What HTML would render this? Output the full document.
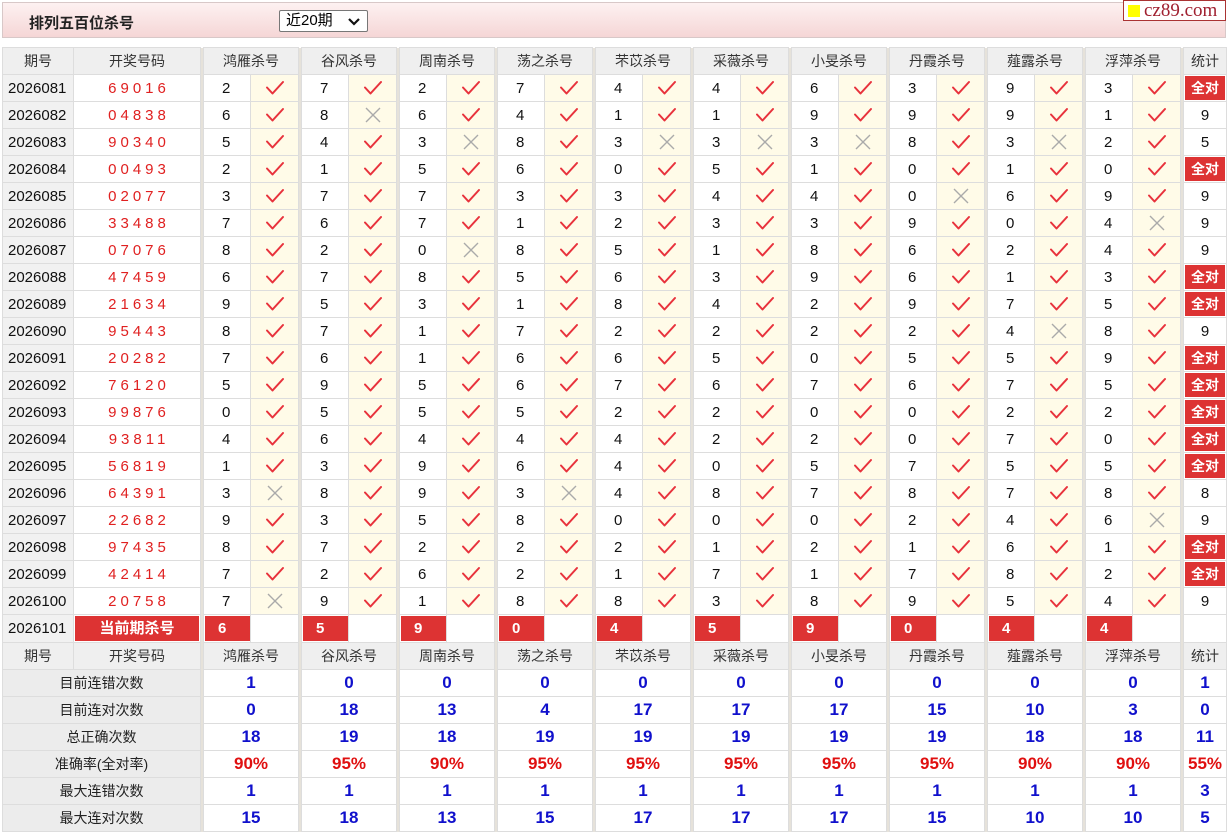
<!DOCTYPE html>
<html><head><meta charset="utf-8"><style>
*{margin:0;padding:0;box-sizing:border-box}
body{width:1228px;height:830px;background:#fff;font-family:"Liberation Sans","Noto Sans CJK SC",sans-serif;position:relative;overflow:hidden}
.top{position:absolute;left:2px;top:2px;width:1224px;height:36px;background:linear-gradient(#fdf1f1,#f5d6d6);border:1px solid #d8c8c8}
.top b{position:absolute;left:26px;top:9px;font-size:15px;color:#222}
.sel{position:absolute;left:276px;top:7px;width:89px;height:22px;border:1px solid #777;border-radius:2px;background:#fff;font-size:15px;padding-left:6px;line-height:20px}
.sel svg{position:absolute;right:7px;top:7px}
.logo{position:absolute;left:1123px;top:0;width:103px;height:21px;border:1px solid #a33;background:#fff;font-family:"Liberation Serif",serif;font-size:19px;color:#a02030;line-height:19px;padding-left:20px}
.logo i{position:absolute;left:4px;top:4px;width:12px;height:12px;background:#ff0}
table{position:absolute;left:2px;top:47px;border-collapse:collapse;table-layout:fixed}
td{border:1px solid #ddd;height:27px;font-size:15px;color:#111;white-space:nowrap;overflow:hidden}
.g{width:3px;background:#e6e2da;border-top:none;border-bottom:none;padding:0}
.h td{background:#efefef;text-align:center;font-size:14px;color:#333}
.h td.g{background:#e6e2da}
.q{background:#f1f1f1;padding-left:5px}
.k{color:#e02020;text-align:center;letter-spacing:4px;padding-left:4px}
.n{padding-left:18px}
.m{background:#fffbe8;text-align:center;padding:0}
.m svg{display:block;margin:0 auto}
.s{text-align:center}
.qd{background:#fff;padding:1px 1px}
.qd span{display:block;background:#d33;color:#fff;font-weight:bold;text-align:center;height:24px;line-height:24px;font-size:14px}
.cur{padding:1px}
.cur span{display:block;background:#d33;color:#fff;font-weight:bold;height:25px;line-height:25px;font-size:15px;text-align:center}
.cn{padding:1px 0 1px 1px}
.cn span{display:block;background:#d33;color:#fff;font-weight:bold;height:25px;line-height:25px;padding-left:13px;font-size:15px}
.lb{background:#ececec;text-align:center;color:#222;font-size:14px}
.v{text-align:center;color:#1010cc;font-weight:bold;font-size:17px;font-family:"Liberation Sans",sans-serif}
.p{color:#e01010}
</style></head><body>
<svg width="0" height="0" style="position:absolute"><symbol id="ck" viewBox="0 0 22 18"><path d="M3 8.5 L8.5 14.5 L19 3" fill="none" stroke="#e8323c" stroke-width="2" stroke-linecap="round" stroke-linejoin="round"/></symbol><symbol id="xx" viewBox="0 0 18 18"><path d="M2 2 L16 16 M16 2 L2 16" stroke="#aaa" stroke-width="1.4"/></symbol></svg>
<div class="top"><b>排列五百位杀号</b><div class="sel">近20期<svg width="12" height="8" viewBox="0 0 12 8"><path d="M1 1 L6 6 L11 1" fill="none" stroke="#111" stroke-width="2.2"/></svg></div></div>
<div class="logo"><i></i>cz89.com</div>
<table>
<colgroup><col style="width:71px"><col style="width:127px"><col span="1" style="width:3px"><col style="width:47px"><col style="width:48px"><col style="width:3px"><col style="width:47px"><col style="width:48px"><col style="width:3px"><col style="width:47px"><col style="width:48px"><col style="width:3px"><col style="width:47px"><col style="width:48px"><col style="width:3px"><col style="width:47px"><col style="width:48px"><col style="width:3px"><col style="width:47px"><col style="width:48px"><col style="width:3px"><col style="width:47px"><col style="width:48px"><col style="width:3px"><col style="width:47px"><col style="width:48px"><col style="width:3px"><col style="width:47px"><col style="width:48px"><col style="width:3px"><col style="width:47px"><col style="width:48px"><col style="width:3px"><col style="width:43px"></colgroup>
<tr class="h"><td>期号</td><td>开奖号码</td><td class="g"></td><td colspan="2">鸿雁杀号</td><td class="g"></td><td colspan="2">谷风杀号</td><td class="g"></td><td colspan="2">周南杀号</td><td class="g"></td><td colspan="2">荡之杀号</td><td class="g"></td><td colspan="2">芣苡杀号</td><td class="g"></td><td colspan="2">采薇杀号</td><td class="g"></td><td colspan="2">小旻杀号</td><td class="g"></td><td colspan="2">丹霞杀号</td><td class="g"></td><td colspan="2">薤露杀号</td><td class="g"></td><td colspan="2">浮萍杀号</td><td class="g"></td><td>统计</td></tr>
<tr><td class="q">2026081</td><td class="k">69016</td><td class="g"></td><td class="n">2</td><td class="m"><svg width="22" height="18"><use href="#ck"/></svg></td><td class="g"></td><td class="n">7</td><td class="m"><svg width="22" height="18"><use href="#ck"/></svg></td><td class="g"></td><td class="n">2</td><td class="m"><svg width="22" height="18"><use href="#ck"/></svg></td><td class="g"></td><td class="n">7</td><td class="m"><svg width="22" height="18"><use href="#ck"/></svg></td><td class="g"></td><td class="n">4</td><td class="m"><svg width="22" height="18"><use href="#ck"/></svg></td><td class="g"></td><td class="n">4</td><td class="m"><svg width="22" height="18"><use href="#ck"/></svg></td><td class="g"></td><td class="n">6</td><td class="m"><svg width="22" height="18"><use href="#ck"/></svg></td><td class="g"></td><td class="n">3</td><td class="m"><svg width="22" height="18"><use href="#ck"/></svg></td><td class="g"></td><td class="n">9</td><td class="m"><svg width="22" height="18"><use href="#ck"/></svg></td><td class="g"></td><td class="n">3</td><td class="m"><svg width="22" height="18"><use href="#ck"/></svg></td><td class="g"></td><td class="qd"><span>全对</span></td></tr>
<tr><td class="q">2026082</td><td class="k">04838</td><td class="g"></td><td class="n">6</td><td class="m"><svg width="22" height="18"><use href="#ck"/></svg></td><td class="g"></td><td class="n">8</td><td class="m"><svg width="18" height="18"><use href="#xx"/></svg></td><td class="g"></td><td class="n">6</td><td class="m"><svg width="22" height="18"><use href="#ck"/></svg></td><td class="g"></td><td class="n">4</td><td class="m"><svg width="22" height="18"><use href="#ck"/></svg></td><td class="g"></td><td class="n">1</td><td class="m"><svg width="22" height="18"><use href="#ck"/></svg></td><td class="g"></td><td class="n">1</td><td class="m"><svg width="22" height="18"><use href="#ck"/></svg></td><td class="g"></td><td class="n">9</td><td class="m"><svg width="22" height="18"><use href="#ck"/></svg></td><td class="g"></td><td class="n">9</td><td class="m"><svg width="22" height="18"><use href="#ck"/></svg></td><td class="g"></td><td class="n">9</td><td class="m"><svg width="22" height="18"><use href="#ck"/></svg></td><td class="g"></td><td class="n">1</td><td class="m"><svg width="22" height="18"><use href="#ck"/></svg></td><td class="g"></td><td class="s">9</td></tr>
<tr><td class="q">2026083</td><td class="k">90340</td><td class="g"></td><td class="n">5</td><td class="m"><svg width="22" height="18"><use href="#ck"/></svg></td><td class="g"></td><td class="n">4</td><td class="m"><svg width="22" height="18"><use href="#ck"/></svg></td><td class="g"></td><td class="n">3</td><td class="m"><svg width="18" height="18"><use href="#xx"/></svg></td><td class="g"></td><td class="n">8</td><td class="m"><svg width="22" height="18"><use href="#ck"/></svg></td><td class="g"></td><td class="n">3</td><td class="m"><svg width="18" height="18"><use href="#xx"/></svg></td><td class="g"></td><td class="n">3</td><td class="m"><svg width="18" height="18"><use href="#xx"/></svg></td><td class="g"></td><td class="n">3</td><td class="m"><svg width="18" height="18"><use href="#xx"/></svg></td><td class="g"></td><td class="n">8</td><td class="m"><svg width="22" height="18"><use href="#ck"/></svg></td><td class="g"></td><td class="n">3</td><td class="m"><svg width="18" height="18"><use href="#xx"/></svg></td><td class="g"></td><td class="n">2</td><td class="m"><svg width="22" height="18"><use href="#ck"/></svg></td><td class="g"></td><td class="s">5</td></tr>
<tr><td class="q">2026084</td><td class="k">00493</td><td class="g"></td><td class="n">2</td><td class="m"><svg width="22" height="18"><use href="#ck"/></svg></td><td class="g"></td><td class="n">1</td><td class="m"><svg width="22" height="18"><use href="#ck"/></svg></td><td class="g"></td><td class="n">5</td><td class="m"><svg width="22" height="18"><use href="#ck"/></svg></td><td class="g"></td><td class="n">6</td><td class="m"><svg width="22" height="18"><use href="#ck"/></svg></td><td class="g"></td><td class="n">0</td><td class="m"><svg width="22" height="18"><use href="#ck"/></svg></td><td class="g"></td><td class="n">5</td><td class="m"><svg width="22" height="18"><use href="#ck"/></svg></td><td class="g"></td><td class="n">1</td><td class="m"><svg width="22" height="18"><use href="#ck"/></svg></td><td class="g"></td><td class="n">0</td><td class="m"><svg width="22" height="18"><use href="#ck"/></svg></td><td class="g"></td><td class="n">1</td><td class="m"><svg width="22" height="18"><use href="#ck"/></svg></td><td class="g"></td><td class="n">0</td><td class="m"><svg width="22" height="18"><use href="#ck"/></svg></td><td class="g"></td><td class="qd"><span>全对</span></td></tr>
<tr><td class="q">2026085</td><td class="k">02077</td><td class="g"></td><td class="n">3</td><td class="m"><svg width="22" height="18"><use href="#ck"/></svg></td><td class="g"></td><td class="n">7</td><td class="m"><svg width="22" height="18"><use href="#ck"/></svg></td><td class="g"></td><td class="n">7</td><td class="m"><svg width="22" height="18"><use href="#ck"/></svg></td><td class="g"></td><td class="n">3</td><td class="m"><svg width="22" height="18"><use href="#ck"/></svg></td><td class="g"></td><td class="n">3</td><td class="m"><svg width="22" height="18"><use href="#ck"/></svg></td><td class="g"></td><td class="n">4</td><td class="m"><svg width="22" height="18"><use href="#ck"/></svg></td><td class="g"></td><td class="n">4</td><td class="m"><svg width="22" height="18"><use href="#ck"/></svg></td><td class="g"></td><td class="n">0</td><td class="m"><svg width="18" height="18"><use href="#xx"/></svg></td><td class="g"></td><td class="n">6</td><td class="m"><svg width="22" height="18"><use href="#ck"/></svg></td><td class="g"></td><td class="n">9</td><td class="m"><svg width="22" height="18"><use href="#ck"/></svg></td><td class="g"></td><td class="s">9</td></tr>
<tr><td class="q">2026086</td><td class="k">33488</td><td class="g"></td><td class="n">7</td><td class="m"><svg width="22" height="18"><use href="#ck"/></svg></td><td class="g"></td><td class="n">6</td><td class="m"><svg width="22" height="18"><use href="#ck"/></svg></td><td class="g"></td><td class="n">7</td><td class="m"><svg width="22" height="18"><use href="#ck"/></svg></td><td class="g"></td><td class="n">1</td><td class="m"><svg width="22" height="18"><use href="#ck"/></svg></td><td class="g"></td><td class="n">2</td><td class="m"><svg width="22" height="18"><use href="#ck"/></svg></td><td class="g"></td><td class="n">3</td><td class="m"><svg width="22" height="18"><use href="#ck"/></svg></td><td class="g"></td><td class="n">3</td><td class="m"><svg width="22" height="18"><use href="#ck"/></svg></td><td class="g"></td><td class="n">9</td><td class="m"><svg width="22" height="18"><use href="#ck"/></svg></td><td class="g"></td><td class="n">0</td><td class="m"><svg width="22" height="18"><use href="#ck"/></svg></td><td class="g"></td><td class="n">4</td><td class="m"><svg width="18" height="18"><use href="#xx"/></svg></td><td class="g"></td><td class="s">9</td></tr>
<tr><td class="q">2026087</td><td class="k">07076</td><td class="g"></td><td class="n">8</td><td class="m"><svg width="22" height="18"><use href="#ck"/></svg></td><td class="g"></td><td class="n">2</td><td class="m"><svg width="22" height="18"><use href="#ck"/></svg></td><td class="g"></td><td class="n">0</td><td class="m"><svg width="18" height="18"><use href="#xx"/></svg></td><td class="g"></td><td class="n">8</td><td class="m"><svg width="22" height="18"><use href="#ck"/></svg></td><td class="g"></td><td class="n">5</td><td class="m"><svg width="22" height="18"><use href="#ck"/></svg></td><td class="g"></td><td class="n">1</td><td class="m"><svg width="22" height="18"><use href="#ck"/></svg></td><td class="g"></td><td class="n">8</td><td class="m"><svg width="22" height="18"><use href="#ck"/></svg></td><td class="g"></td><td class="n">6</td><td class="m"><svg width="22" height="18"><use href="#ck"/></svg></td><td class="g"></td><td class="n">2</td><td class="m"><svg width="22" height="18"><use href="#ck"/></svg></td><td class="g"></td><td class="n">4</td><td class="m"><svg width="22" height="18"><use href="#ck"/></svg></td><td class="g"></td><td class="s">9</td></tr>
<tr><td class="q">2026088</td><td class="k">47459</td><td class="g"></td><td class="n">6</td><td class="m"><svg width="22" height="18"><use href="#ck"/></svg></td><td class="g"></td><td class="n">7</td><td class="m"><svg width="22" height="18"><use href="#ck"/></svg></td><td class="g"></td><td class="n">8</td><td class="m"><svg width="22" height="18"><use href="#ck"/></svg></td><td class="g"></td><td class="n">5</td><td class="m"><svg width="22" height="18"><use href="#ck"/></svg></td><td class="g"></td><td class="n">6</td><td class="m"><svg width="22" height="18"><use href="#ck"/></svg></td><td class="g"></td><td class="n">3</td><td class="m"><svg width="22" height="18"><use href="#ck"/></svg></td><td class="g"></td><td class="n">9</td><td class="m"><svg width="22" height="18"><use href="#ck"/></svg></td><td class="g"></td><td class="n">6</td><td class="m"><svg width="22" height="18"><use href="#ck"/></svg></td><td class="g"></td><td class="n">1</td><td class="m"><svg width="22" height="18"><use href="#ck"/></svg></td><td class="g"></td><td class="n">3</td><td class="m"><svg width="22" height="18"><use href="#ck"/></svg></td><td class="g"></td><td class="qd"><span>全对</span></td></tr>
<tr><td class="q">2026089</td><td class="k">21634</td><td class="g"></td><td class="n">9</td><td class="m"><svg width="22" height="18"><use href="#ck"/></svg></td><td class="g"></td><td class="n">5</td><td class="m"><svg width="22" height="18"><use href="#ck"/></svg></td><td class="g"></td><td class="n">3</td><td class="m"><svg width="22" height="18"><use href="#ck"/></svg></td><td class="g"></td><td class="n">1</td><td class="m"><svg width="22" height="18"><use href="#ck"/></svg></td><td class="g"></td><td class="n">8</td><td class="m"><svg width="22" height="18"><use href="#ck"/></svg></td><td class="g"></td><td class="n">4</td><td class="m"><svg width="22" height="18"><use href="#ck"/></svg></td><td class="g"></td><td class="n">2</td><td class="m"><svg width="22" height="18"><use href="#ck"/></svg></td><td class="g"></td><td class="n">9</td><td class="m"><svg width="22" height="18"><use href="#ck"/></svg></td><td class="g"></td><td class="n">7</td><td class="m"><svg width="22" height="18"><use href="#ck"/></svg></td><td class="g"></td><td class="n">5</td><td class="m"><svg width="22" height="18"><use href="#ck"/></svg></td><td class="g"></td><td class="qd"><span>全对</span></td></tr>
<tr><td class="q">2026090</td><td class="k">95443</td><td class="g"></td><td class="n">8</td><td class="m"><svg width="22" height="18"><use href="#ck"/></svg></td><td class="g"></td><td class="n">7</td><td class="m"><svg width="22" height="18"><use href="#ck"/></svg></td><td class="g"></td><td class="n">1</td><td class="m"><svg width="22" height="18"><use href="#ck"/></svg></td><td class="g"></td><td class="n">7</td><td class="m"><svg width="22" height="18"><use href="#ck"/></svg></td><td class="g"></td><td class="n">2</td><td class="m"><svg width="22" height="18"><use href="#ck"/></svg></td><td class="g"></td><td class="n">2</td><td class="m"><svg width="22" height="18"><use href="#ck"/></svg></td><td class="g"></td><td class="n">2</td><td class="m"><svg width="22" height="18"><use href="#ck"/></svg></td><td class="g"></td><td class="n">2</td><td class="m"><svg width="22" height="18"><use href="#ck"/></svg></td><td class="g"></td><td class="n">4</td><td class="m"><svg width="18" height="18"><use href="#xx"/></svg></td><td class="g"></td><td class="n">8</td><td class="m"><svg width="22" height="18"><use href="#ck"/></svg></td><td class="g"></td><td class="s">9</td></tr>
<tr><td class="q">2026091</td><td class="k">20282</td><td class="g"></td><td class="n">7</td><td class="m"><svg width="22" height="18"><use href="#ck"/></svg></td><td class="g"></td><td class="n">6</td><td class="m"><svg width="22" height="18"><use href="#ck"/></svg></td><td class="g"></td><td class="n">1</td><td class="m"><svg width="22" height="18"><use href="#ck"/></svg></td><td class="g"></td><td class="n">6</td><td class="m"><svg width="22" height="18"><use href="#ck"/></svg></td><td class="g"></td><td class="n">6</td><td class="m"><svg width="22" height="18"><use href="#ck"/></svg></td><td class="g"></td><td class="n">5</td><td class="m"><svg width="22" height="18"><use href="#ck"/></svg></td><td class="g"></td><td class="n">0</td><td class="m"><svg width="22" height="18"><use href="#ck"/></svg></td><td class="g"></td><td class="n">5</td><td class="m"><svg width="22" height="18"><use href="#ck"/></svg></td><td class="g"></td><td class="n">5</td><td class="m"><svg width="22" height="18"><use href="#ck"/></svg></td><td class="g"></td><td class="n">9</td><td class="m"><svg width="22" height="18"><use href="#ck"/></svg></td><td class="g"></td><td class="qd"><span>全对</span></td></tr>
<tr><td class="q">2026092</td><td class="k">76120</td><td class="g"></td><td class="n">5</td><td class="m"><svg width="22" height="18"><use href="#ck"/></svg></td><td class="g"></td><td class="n">9</td><td class="m"><svg width="22" height="18"><use href="#ck"/></svg></td><td class="g"></td><td class="n">5</td><td class="m"><svg width="22" height="18"><use href="#ck"/></svg></td><td class="g"></td><td class="n">6</td><td class="m"><svg width="22" height="18"><use href="#ck"/></svg></td><td class="g"></td><td class="n">7</td><td class="m"><svg width="22" height="18"><use href="#ck"/></svg></td><td class="g"></td><td class="n">6</td><td class="m"><svg width="22" height="18"><use href="#ck"/></svg></td><td class="g"></td><td class="n">7</td><td class="m"><svg width="22" height="18"><use href="#ck"/></svg></td><td class="g"></td><td class="n">6</td><td class="m"><svg width="22" height="18"><use href="#ck"/></svg></td><td class="g"></td><td class="n">7</td><td class="m"><svg width="22" height="18"><use href="#ck"/></svg></td><td class="g"></td><td class="n">5</td><td class="m"><svg width="22" height="18"><use href="#ck"/></svg></td><td class="g"></td><td class="qd"><span>全对</span></td></tr>
<tr><td class="q">2026093</td><td class="k">99876</td><td class="g"></td><td class="n">0</td><td class="m"><svg width="22" height="18"><use href="#ck"/></svg></td><td class="g"></td><td class="n">5</td><td class="m"><svg width="22" height="18"><use href="#ck"/></svg></td><td class="g"></td><td class="n">5</td><td class="m"><svg width="22" height="18"><use href="#ck"/></svg></td><td class="g"></td><td class="n">5</td><td class="m"><svg width="22" height="18"><use href="#ck"/></svg></td><td class="g"></td><td class="n">2</td><td class="m"><svg width="22" height="18"><use href="#ck"/></svg></td><td class="g"></td><td class="n">2</td><td class="m"><svg width="22" height="18"><use href="#ck"/></svg></td><td class="g"></td><td class="n">0</td><td class="m"><svg width="22" height="18"><use href="#ck"/></svg></td><td class="g"></td><td class="n">0</td><td class="m"><svg width="22" height="18"><use href="#ck"/></svg></td><td class="g"></td><td class="n">2</td><td class="m"><svg width="22" height="18"><use href="#ck"/></svg></td><td class="g"></td><td class="n">2</td><td class="m"><svg width="22" height="18"><use href="#ck"/></svg></td><td class="g"></td><td class="qd"><span>全对</span></td></tr>
<tr><td class="q">2026094</td><td class="k">93811</td><td class="g"></td><td class="n">4</td><td class="m"><svg width="22" height="18"><use href="#ck"/></svg></td><td class="g"></td><td class="n">6</td><td class="m"><svg width="22" height="18"><use href="#ck"/></svg></td><td class="g"></td><td class="n">4</td><td class="m"><svg width="22" height="18"><use href="#ck"/></svg></td><td class="g"></td><td class="n">4</td><td class="m"><svg width="22" height="18"><use href="#ck"/></svg></td><td class="g"></td><td class="n">4</td><td class="m"><svg width="22" height="18"><use href="#ck"/></svg></td><td class="g"></td><td class="n">2</td><td class="m"><svg width="22" height="18"><use href="#ck"/></svg></td><td class="g"></td><td class="n">2</td><td class="m"><svg width="22" height="18"><use href="#ck"/></svg></td><td class="g"></td><td class="n">0</td><td class="m"><svg width="22" height="18"><use href="#ck"/></svg></td><td class="g"></td><td class="n">7</td><td class="m"><svg width="22" height="18"><use href="#ck"/></svg></td><td class="g"></td><td class="n">0</td><td class="m"><svg width="22" height="18"><use href="#ck"/></svg></td><td class="g"></td><td class="qd"><span>全对</span></td></tr>
<tr><td class="q">2026095</td><td class="k">56819</td><td class="g"></td><td class="n">1</td><td class="m"><svg width="22" height="18"><use href="#ck"/></svg></td><td class="g"></td><td class="n">3</td><td class="m"><svg width="22" height="18"><use href="#ck"/></svg></td><td class="g"></td><td class="n">9</td><td class="m"><svg width="22" height="18"><use href="#ck"/></svg></td><td class="g"></td><td class="n">6</td><td class="m"><svg width="22" height="18"><use href="#ck"/></svg></td><td class="g"></td><td class="n">4</td><td class="m"><svg width="22" height="18"><use href="#ck"/></svg></td><td class="g"></td><td class="n">0</td><td class="m"><svg width="22" height="18"><use href="#ck"/></svg></td><td class="g"></td><td class="n">5</td><td class="m"><svg width="22" height="18"><use href="#ck"/></svg></td><td class="g"></td><td class="n">7</td><td class="m"><svg width="22" height="18"><use href="#ck"/></svg></td><td class="g"></td><td class="n">5</td><td class="m"><svg width="22" height="18"><use href="#ck"/></svg></td><td class="g"></td><td class="n">5</td><td class="m"><svg width="22" height="18"><use href="#ck"/></svg></td><td class="g"></td><td class="qd"><span>全对</span></td></tr>
<tr><td class="q">2026096</td><td class="k">64391</td><td class="g"></td><td class="n">3</td><td class="m"><svg width="18" height="18"><use href="#xx"/></svg></td><td class="g"></td><td class="n">8</td><td class="m"><svg width="22" height="18"><use href="#ck"/></svg></td><td class="g"></td><td class="n">9</td><td class="m"><svg width="22" height="18"><use href="#ck"/></svg></td><td class="g"></td><td class="n">3</td><td class="m"><svg width="18" height="18"><use href="#xx"/></svg></td><td class="g"></td><td class="n">4</td><td class="m"><svg width="22" height="18"><use href="#ck"/></svg></td><td class="g"></td><td class="n">8</td><td class="m"><svg width="22" height="18"><use href="#ck"/></svg></td><td class="g"></td><td class="n">7</td><td class="m"><svg width="22" height="18"><use href="#ck"/></svg></td><td class="g"></td><td class="n">8</td><td class="m"><svg width="22" height="18"><use href="#ck"/></svg></td><td class="g"></td><td class="n">7</td><td class="m"><svg width="22" height="18"><use href="#ck"/></svg></td><td class="g"></td><td class="n">8</td><td class="m"><svg width="22" height="18"><use href="#ck"/></svg></td><td class="g"></td><td class="s">8</td></tr>
<tr><td class="q">2026097</td><td class="k">22682</td><td class="g"></td><td class="n">9</td><td class="m"><svg width="22" height="18"><use href="#ck"/></svg></td><td class="g"></td><td class="n">3</td><td class="m"><svg width="22" height="18"><use href="#ck"/></svg></td><td class="g"></td><td class="n">5</td><td class="m"><svg width="22" height="18"><use href="#ck"/></svg></td><td class="g"></td><td class="n">8</td><td class="m"><svg width="22" height="18"><use href="#ck"/></svg></td><td class="g"></td><td class="n">0</td><td class="m"><svg width="22" height="18"><use href="#ck"/></svg></td><td class="g"></td><td class="n">0</td><td class="m"><svg width="22" height="18"><use href="#ck"/></svg></td><td class="g"></td><td class="n">0</td><td class="m"><svg width="22" height="18"><use href="#ck"/></svg></td><td class="g"></td><td class="n">2</td><td class="m"><svg width="22" height="18"><use href="#ck"/></svg></td><td class="g"></td><td class="n">4</td><td class="m"><svg width="22" height="18"><use href="#ck"/></svg></td><td class="g"></td><td class="n">6</td><td class="m"><svg width="18" height="18"><use href="#xx"/></svg></td><td class="g"></td><td class="s">9</td></tr>
<tr><td class="q">2026098</td><td class="k">97435</td><td class="g"></td><td class="n">8</td><td class="m"><svg width="22" height="18"><use href="#ck"/></svg></td><td class="g"></td><td class="n">7</td><td class="m"><svg width="22" height="18"><use href="#ck"/></svg></td><td class="g"></td><td class="n">2</td><td class="m"><svg width="22" height="18"><use href="#ck"/></svg></td><td class="g"></td><td class="n">2</td><td class="m"><svg width="22" height="18"><use href="#ck"/></svg></td><td class="g"></td><td class="n">2</td><td class="m"><svg width="22" height="18"><use href="#ck"/></svg></td><td class="g"></td><td class="n">1</td><td class="m"><svg width="22" height="18"><use href="#ck"/></svg></td><td class="g"></td><td class="n">2</td><td class="m"><svg width="22" height="18"><use href="#ck"/></svg></td><td class="g"></td><td class="n">1</td><td class="m"><svg width="22" height="18"><use href="#ck"/></svg></td><td class="g"></td><td class="n">6</td><td class="m"><svg width="22" height="18"><use href="#ck"/></svg></td><td class="g"></td><td class="n">1</td><td class="m"><svg width="22" height="18"><use href="#ck"/></svg></td><td class="g"></td><td class="qd"><span>全对</span></td></tr>
<tr><td class="q">2026099</td><td class="k">42414</td><td class="g"></td><td class="n">7</td><td class="m"><svg width="22" height="18"><use href="#ck"/></svg></td><td class="g"></td><td class="n">2</td><td class="m"><svg width="22" height="18"><use href="#ck"/></svg></td><td class="g"></td><td class="n">6</td><td class="m"><svg width="22" height="18"><use href="#ck"/></svg></td><td class="g"></td><td class="n">2</td><td class="m"><svg width="22" height="18"><use href="#ck"/></svg></td><td class="g"></td><td class="n">1</td><td class="m"><svg width="22" height="18"><use href="#ck"/></svg></td><td class="g"></td><td class="n">7</td><td class="m"><svg width="22" height="18"><use href="#ck"/></svg></td><td class="g"></td><td class="n">1</td><td class="m"><svg width="22" height="18"><use href="#ck"/></svg></td><td class="g"></td><td class="n">7</td><td class="m"><svg width="22" height="18"><use href="#ck"/></svg></td><td class="g"></td><td class="n">8</td><td class="m"><svg width="22" height="18"><use href="#ck"/></svg></td><td class="g"></td><td class="n">2</td><td class="m"><svg width="22" height="18"><use href="#ck"/></svg></td><td class="g"></td><td class="qd"><span>全对</span></td></tr>
<tr><td class="q">2026100</td><td class="k">20758</td><td class="g"></td><td class="n">7</td><td class="m"><svg width="18" height="18"><use href="#xx"/></svg></td><td class="g"></td><td class="n">9</td><td class="m"><svg width="22" height="18"><use href="#ck"/></svg></td><td class="g"></td><td class="n">1</td><td class="m"><svg width="22" height="18"><use href="#ck"/></svg></td><td class="g"></td><td class="n">8</td><td class="m"><svg width="22" height="18"><use href="#ck"/></svg></td><td class="g"></td><td class="n">8</td><td class="m"><svg width="22" height="18"><use href="#ck"/></svg></td><td class="g"></td><td class="n">3</td><td class="m"><svg width="22" height="18"><use href="#ck"/></svg></td><td class="g"></td><td class="n">8</td><td class="m"><svg width="22" height="18"><use href="#ck"/></svg></td><td class="g"></td><td class="n">9</td><td class="m"><svg width="22" height="18"><use href="#ck"/></svg></td><td class="g"></td><td class="n">5</td><td class="m"><svg width="22" height="18"><use href="#ck"/></svg></td><td class="g"></td><td class="n">4</td><td class="m"><svg width="22" height="18"><use href="#ck"/></svg></td><td class="g"></td><td class="s">9</td></tr>
<tr><td class="q">2026101</td><td class="cur"><span>当前期杀号</span></td><td class="g"></td><td class="cn"><span>6</span></td><td></td><td class="g"></td><td class="cn"><span>5</span></td><td></td><td class="g"></td><td class="cn"><span>9</span></td><td></td><td class="g"></td><td class="cn"><span>0</span></td><td></td><td class="g"></td><td class="cn"><span>4</span></td><td></td><td class="g"></td><td class="cn"><span>5</span></td><td></td><td class="g"></td><td class="cn"><span>9</span></td><td></td><td class="g"></td><td class="cn"><span>0</span></td><td></td><td class="g"></td><td class="cn"><span>4</span></td><td></td><td class="g"></td><td class="cn"><span>4</span></td><td></td><td class="g"></td><td></td></tr>
<tr class="h"><td>期号</td><td>开奖号码</td><td class="g"></td><td colspan="2">鸿雁杀号</td><td class="g"></td><td colspan="2">谷风杀号</td><td class="g"></td><td colspan="2">周南杀号</td><td class="g"></td><td colspan="2">荡之杀号</td><td class="g"></td><td colspan="2">芣苡杀号</td><td class="g"></td><td colspan="2">采薇杀号</td><td class="g"></td><td colspan="2">小旻杀号</td><td class="g"></td><td colspan="2">丹霞杀号</td><td class="g"></td><td colspan="2">薤露杀号</td><td class="g"></td><td colspan="2">浮萍杀号</td><td class="g"></td><td>统计</td></tr>
<tr><td class="lb" colspan="2">目前连错次数</td><td class="g"></td><td class="v" colspan="2">1</td><td class="g"></td><td class="v" colspan="2">0</td><td class="g"></td><td class="v" colspan="2">0</td><td class="g"></td><td class="v" colspan="2">0</td><td class="g"></td><td class="v" colspan="2">0</td><td class="g"></td><td class="v" colspan="2">0</td><td class="g"></td><td class="v" colspan="2">0</td><td class="g"></td><td class="v" colspan="2">0</td><td class="g"></td><td class="v" colspan="2">0</td><td class="g"></td><td class="v" colspan="2">0</td><td class="g"></td><td class="v">1</td></tr>
<tr><td class="lb" colspan="2">目前连对次数</td><td class="g"></td><td class="v" colspan="2">0</td><td class="g"></td><td class="v" colspan="2">18</td><td class="g"></td><td class="v" colspan="2">13</td><td class="g"></td><td class="v" colspan="2">4</td><td class="g"></td><td class="v" colspan="2">17</td><td class="g"></td><td class="v" colspan="2">17</td><td class="g"></td><td class="v" colspan="2">17</td><td class="g"></td><td class="v" colspan="2">15</td><td class="g"></td><td class="v" colspan="2">10</td><td class="g"></td><td class="v" colspan="2">3</td><td class="g"></td><td class="v">0</td></tr>
<tr><td class="lb" colspan="2">总正确次数</td><td class="g"></td><td class="v" colspan="2">18</td><td class="g"></td><td class="v" colspan="2">19</td><td class="g"></td><td class="v" colspan="2">18</td><td class="g"></td><td class="v" colspan="2">19</td><td class="g"></td><td class="v" colspan="2">19</td><td class="g"></td><td class="v" colspan="2">19</td><td class="g"></td><td class="v" colspan="2">19</td><td class="g"></td><td class="v" colspan="2">19</td><td class="g"></td><td class="v" colspan="2">18</td><td class="g"></td><td class="v" colspan="2">18</td><td class="g"></td><td class="v">11</td></tr>
<tr><td class="lb" colspan="2">准确率(全对率)</td><td class="g"></td><td class="v p" colspan="2">90%</td><td class="g"></td><td class="v p" colspan="2">95%</td><td class="g"></td><td class="v p" colspan="2">90%</td><td class="g"></td><td class="v p" colspan="2">95%</td><td class="g"></td><td class="v p" colspan="2">95%</td><td class="g"></td><td class="v p" colspan="2">95%</td><td class="g"></td><td class="v p" colspan="2">95%</td><td class="g"></td><td class="v p" colspan="2">95%</td><td class="g"></td><td class="v p" colspan="2">90%</td><td class="g"></td><td class="v p" colspan="2">90%</td><td class="g"></td><td class="v p">55%</td></tr>
<tr><td class="lb" colspan="2">最大连错次数</td><td class="g"></td><td class="v" colspan="2">1</td><td class="g"></td><td class="v" colspan="2">1</td><td class="g"></td><td class="v" colspan="2">1</td><td class="g"></td><td class="v" colspan="2">1</td><td class="g"></td><td class="v" colspan="2">1</td><td class="g"></td><td class="v" colspan="2">1</td><td class="g"></td><td class="v" colspan="2">1</td><td class="g"></td><td class="v" colspan="2">1</td><td class="g"></td><td class="v" colspan="2">1</td><td class="g"></td><td class="v" colspan="2">1</td><td class="g"></td><td class="v">3</td></tr>
<tr><td class="lb" colspan="2">最大连对次数</td><td class="g"></td><td class="v" colspan="2">15</td><td class="g"></td><td class="v" colspan="2">18</td><td class="g"></td><td class="v" colspan="2">13</td><td class="g"></td><td class="v" colspan="2">15</td><td class="g"></td><td class="v" colspan="2">17</td><td class="g"></td><td class="v" colspan="2">17</td><td class="g"></td><td class="v" colspan="2">17</td><td class="g"></td><td class="v" colspan="2">15</td><td class="g"></td><td class="v" colspan="2">10</td><td class="g"></td><td class="v" colspan="2">10</td><td class="g"></td><td class="v">5</td></tr>
</table>
</body></html>
